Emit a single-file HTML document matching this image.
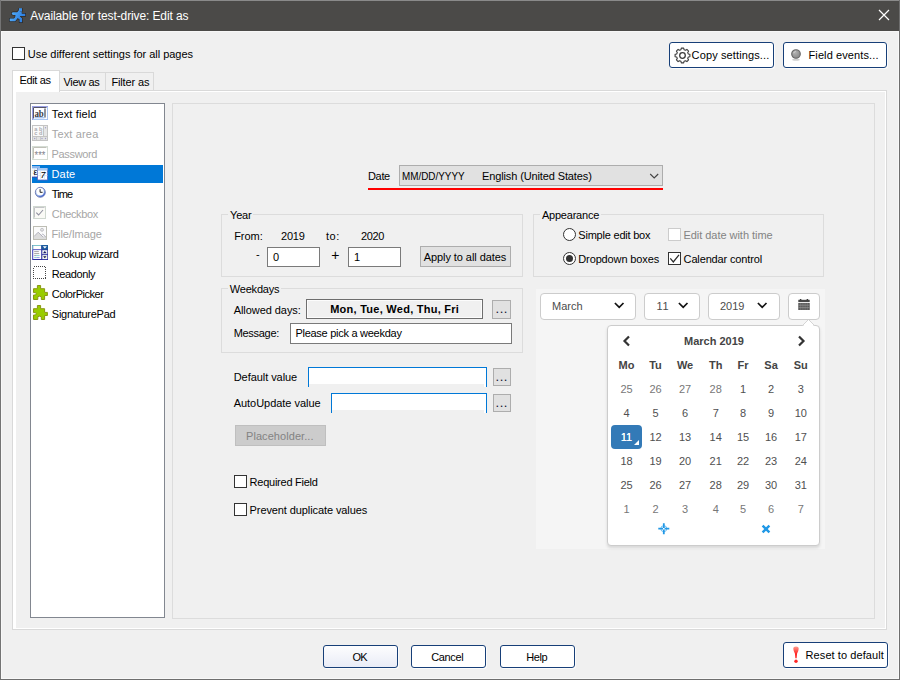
<!DOCTYPE html>
<html><head><meta charset="utf-8"><title>Available for test-drive: Edit as</title>
<style>
*{box-sizing:border-box;margin:0;padding:0}
html,body{width:900px;height:680px;overflow:hidden;background:#f0f0f0}
body{position:relative;font-family:"Liberation Sans",sans-serif;font-size:11px;color:#000}
.a{position:absolute}
.t{position:absolute;white-space:nowrap;line-height:13px;font-size:11px}
.dis{color:#838383}
.grp{position:absolute;border:1px solid #dcdcdc}
.lbl{background:#f0f0f0}
.btn{position:absolute;background:#e1e1e1;border:1px solid #adadad}
.bbtn{position:absolute;background:#fff;border:1px solid #173f78;border-radius:3px;box-shadow:1px 1px 0 rgba(255,255,255,.75)}
.inp{position:absolute;background:#fff;border:1px solid #7a7a7a}
.cb{position:absolute;width:13px;height:13px;background:#fff;border:1px solid #333}
.rb{position:absolute;width:13px;height:13px;background:#fff;border:1px solid #333;border-radius:50%}
.sel{position:absolute;background:#fff;border:1px solid #ccc;border-radius:4px;height:27px;top:293px}
.cal{font-family:"Liberation Sans",sans-serif;font-size:11px;color:#333}
.cal .t{font-size:11px}
.d{position:absolute;width:30px;text-align:center;line-height:13px;font-size:11px;color:#505050}
.o{color:#777}
.h{font-weight:bold;color:#444}
</style></head><body>
<!-- window frame -->
<div class="a" style="left:0;top:0;width:900px;height:32px;background:#4b4a48"></div>
<div class="a" style="left:0;top:31px;width:900px;height:1px;background:#f7f7f7"></div>
<div class="a" style="left:0;top:0;width:900px;height:1px;background:#8a8a8a"></div>
<div class="a" style="left:0;top:0;width:1px;height:680px;background:#747474"></div>
<div class="a" style="left:898px;top:32px;width:1px;height:647px;background:#f8f8f8"></div>
<div class="a" style="left:1px;top:32px;width:1px;height:647px;background:#f8f8f8"></div>
<div class="a" style="left:1px;top:678px;width:898px;height:1px;background:#f8f8f8"></div>
<div class="a" style="left:899px;top:0;width:1px;height:680px;background:#6e6e6e"></div>
<div class="a" style="left:0;top:679px;width:900px;height:1px;background:#6e6e6e"></div>
<!-- title -->
<svg class="a" style="left:6px;top:4px" width="24" height="22" viewBox="0 0 24 22"><defs><linearGradient id="rm" gradientUnits="userSpaceOnUse" x1="4" y1="8" x2="19" y2="14"><stop offset="0" stop-color="#56b0fa"/><stop offset="1" stop-color="#2878dc"/></linearGradient></defs><g fill="none" stroke-linejoin="miter"><path d="M14.45 4.2V7.6" stroke="#2a2420" stroke-width="4.4" stroke-linecap="butt"/><path d="M14.3 7.6L10.8 13.4" stroke="#2a2420" stroke-width="5.7" stroke-linecap="butt"/><path d="M7.2 9.55H13" stroke="#2a2420" stroke-width="4.1" stroke-linecap="round"/><path d="M14.8 10.85H18.1" stroke="#2a2420" stroke-width="3.5999999999999996" stroke-linecap="square"/><path d="M10.8 13.2L8.6 15.85H5" stroke="#2a2420" stroke-width="3.9000000000000004" stroke-linecap="square"/><path d="M12 12.6L14.8 14.8V17" stroke="#2a2420" stroke-width="3.8" stroke-linecap="square"/><path d="M14.45 4.2V7.6" stroke="url(#rm)" stroke-width="3.1" stroke-linecap="butt"/><path d="M14.3 7.6L10.8 13.4" stroke="url(#rm)" stroke-width="4.4" stroke-linecap="butt"/><path d="M7.2 9.55H13" stroke="url(#rm)" stroke-width="2.8" stroke-linecap="round"/><path d="M14.8 10.85H18.1" stroke="url(#rm)" stroke-width="2.3" stroke-linecap="square"/><path d="M10.8 13.2L8.6 15.85H5" stroke="url(#rm)" stroke-width="2.6" stroke-linecap="square"/><path d="M12 12.6L14.8 14.8V17" stroke="url(#rm)" stroke-width="2.5" stroke-linecap="square"/></g></svg>
<div class="t" id="title" style="letter-spacing:-0.116px;left:30.3px;top:9px;font-size:12px;line-height:14px;color:#fff">Available for test-drive: Edit as</div>
<svg class="a" style="left:878px;top:9px" width="12" height="12" viewBox="0 0 12 12"><path d="M1 1L11 11M11 1L1 11" stroke="#fff" stroke-width="1.2" fill="none"/></svg>

<!-- top row -->
<div class="cb" style="left:12px;top:47px"></div>
<div class="t" style="letter-spacing:-0.026px;left:27.8px;top:48px">Use different settings for all pages</div>
<div class="bbtn" style="left:669px;top:42px;width:105px;height:26px"></div>
<svg class="a" style="left:674px;top:47px" width="17" height="17" viewBox="0 0 17 17"><g fill="none" stroke="#3c3c3c"><path d="M6.95 2.70L7.33 1.09L9.67 1.09L10.05 2.70L11.50 3.30L12.91 2.43L14.57 4.09L13.70 5.50L14.30 6.95L15.91 7.33L15.91 9.67L14.30 10.05L13.70 11.50L14.57 12.91L12.91 14.57L11.50 13.70L10.05 14.30L9.67 15.91L7.33 15.91L6.95 14.30L5.50 13.70L4.09 14.57L2.43 12.91L3.30 11.50L2.70 10.05L1.09 9.67L1.09 7.33L2.70 6.95L3.30 5.50L2.43 4.09L4.09 2.43L5.50 3.30Z" stroke-width="1.1" stroke-linejoin="round"/><circle cx="8.5" cy="8.5" r="2.8" stroke-width="1.3"/></g></svg>
<div class="t" style="letter-spacing:0.12px;left:691.6px;top:49px">Copy settings...</div>
<div class="bbtn" style="left:783px;top:42px;width:104px;height:26px"></div>
<svg class="a" style="left:789.5px;top:48.2px" width="12" height="14" viewBox="0 0 12 14"><defs><radialGradient id="gb" cx="0.38" cy="0.32" r="0.75"><stop offset="0" stop-color="#b4b4b4"/><stop offset="1" stop-color="#858585"/></radialGradient></defs><ellipse cx="6" cy="11.8" rx="3.8" ry="1" fill="#cfcfcf"/><circle cx="6" cy="6" r="4.3" fill="url(#gb)" stroke="#666" stroke-width="1.1"/><path d="M3.6 5.2Q4.2 3.6 5.8 3.2" stroke="#d8d8d8" stroke-width="0.8" fill="none"/></svg>
<div class="t" style="letter-spacing:0.107px;left:808.5px;top:49px">Field events...</div>

<!-- tabs -->
<div class="a" style="left:12px;top:90px;width:875px;height:540px;background:#fff;border:1px solid #d9d9d9"></div>
<div class="a" style="left:16px;top:92px;width:869px;height:536px;background:#f0f0f0"></div>
<div class="a" style="left:59px;top:72px;width:47px;height:19px;background:#f0f0f0;border:1px solid #d9d9d9;border-left:none"></div>
<div class="a" style="left:105px;top:72px;width:49px;height:19px;background:#f0f0f0;border:1px solid #d9d9d9"></div>
<div class="a" style="left:12px;top:70px;width:48px;height:22px;background:#fff;border:1px solid #d9d9d9;border-bottom:none"></div>
<div class="t" style="letter-spacing:-0.333px;left:19.4px;top:74px">Edit as</div>
<div class="t" style="letter-spacing:-0.367px;left:63.6px;top:76px">View as</div>
<div class="t" style="letter-spacing:-0.125px;left:111.4px;top:76px">Filter as</div>

<!-- list -->
<div class="a" style="left:30px;top:103px;width:135px;height:515px;background:#fff;border:1px solid #828790"></div>
<div class="a" style="left:32px;top:165px;width:131px;height:18px;background:#0078d7"></div>
<div class="t" style="letter-spacing:0.133px;left:51.8px;top:108px">Text field</div>
<div class="t" style="letter-spacing:0.150px;left:51.8px;top:128px;color:#a6a6a6">Text area</div>
<div class="t" style="letter-spacing:-0.33px;left:51.5px;top:148px;color:#a6a6a6">Password</div>
<div class="t" style="letter-spacing:0.167px;left:51.5px;top:168px;color:#fff">Date</div>
<div class="t" style="letter-spacing:-0.933px;left:51.8px;top:188px">Time</div>
<div class="t" style="letter-spacing:-0.357px;left:51.8px;top:208px;color:#a6a6a6">Checkbox</div>
<div class="t" style="letter-spacing:-0.122px;left:51.5px;top:228px;color:#a6a6a6">File/Image</div>
<div class="t" style="letter-spacing:-0.317px;left:51.8px;top:248px">Lookup wizard</div>
<div class="t" style="letter-spacing:-0.400px;left:51.8px;top:268px">Readonly</div>
<div class="t" style="letter-spacing:-0.480px;left:51.8px;top:288px">ColorPicker</div>
<div class="t" style="letter-spacing:-0.255px;left:51.8px;top:308px">SignaturePad</div>

<!-- right group -->
<div class="grp" style="left:172px;top:103px;width:703px;height:516px"></div>

<!-- list icons -->
<svg class="a" style="left:32px;top:106px" width="16" height="14" viewBox="0 0 16 14"><rect x="0.5" y="0.5" width="15" height="13" fill="#fff" stroke="#9aa0e4"/><path d="M1.5 12.5V1.5H14.5" fill="none" stroke="#55556a"/><path d="M15.5 1v12.5H1" fill="none" stroke="#a8c6f4"/><text x="2.4" y="11.4" font-family="Liberation Serif,serif" font-size="11" font-weight="bold" fill="#3a3a44" textLength="9.4" lengthAdjust="spacingAndGlyphs">ab</text><path d="M13 2.4v9" stroke="#3a3a44" stroke-width="1.1"/><path d="M2.5 11.8h10" stroke="#7aa8ec" stroke-width="0.9"/></svg>
<svg class="a" style="left:32px;top:125px" width="16" height="16" viewBox="0 0 16 16"><rect x="0.5" y="0.5" width="15" height="15" fill="#fafafa" stroke="#c4c4c4"/><path d="M11.5 1v14M1 11.5h14" stroke="#c4c4c4"/><rect x="12" y="1" width="3" height="10" fill="#e6e6e6"/><rect x="1" y="12" width="14" height="3" fill="#e2e2e2"/><path d="M4.5 12v3M8.5 12v3" stroke="#c4c4c4" stroke-width="0.8"/><text x="2.2" y="6" font-family="Liberation Sans,sans-serif" font-size="5.6" font-weight="bold" fill="#acacb2">a</text><text x="7" y="6" font-family="Liberation Sans,sans-serif" font-size="5.6" font-weight="bold" fill="#acacb2">b</text><text x="2.2" y="10.4" font-family="Liberation Sans,sans-serif" font-size="5.6" font-weight="bold" fill="#acacb2">c</text><text x="7" y="10.4" font-family="Liberation Sans,sans-serif" font-size="5.6" font-weight="bold" fill="#acacb2">d</text><circle cx="13.5" cy="2.7" r="0.7" fill="#a0a0c8"/><circle cx="13.5" cy="13.5" r="0.7" fill="#a0a0c8"/><circle cx="2.7" cy="13.5" r="0.7" fill="#a0a0c8"/><circle cx="10" cy="13.5" r="0.7" fill="#a0a0c8"/></svg>
<svg class="a" style="left:32px;top:146px" width="16" height="14" viewBox="0 0 16 14"><rect x="0.5" y="0.5" width="15" height="13" fill="#fff" stroke="#d4dcd4"/><path d="M1.5 12.5V1.5H14.5" fill="none" stroke="#c0c0b8"/><text x="2.6" y="13.4" font-family="Liberation Sans,sans-serif" font-size="11.5" fill="#85858e" textLength="10.8" lengthAdjust="spacingAndGlyphs">***</text></svg>
<svg class="a" style="left:32px;top:165px" width="16" height="16" viewBox="0 0 16 16"><rect x="0" y="1.5" width="8" height="10.5" fill="#fff"/><rect x="0" y="1" width="8" height="2.4" fill="#8ab6ee"/><path d="M0 5.2h8M0 8h8M2.6 3.4v8.6" stroke="#c8daf4" stroke-width="0.7"/><text x="1.6" y="10.2" font-family="Liberation Sans,sans-serif" font-size="9" fill="#000">ε</text><rect x="0" y="11.6" width="8" height="1" fill="#3c4ab0"/><rect x="5.5" y="3.5" width="10" height="11.5" fill="#fff" stroke="#5a64c0" stroke-width="0.8"/><rect x="5.5" y="3" width="10" height="2.6" fill="#a4c8f4"/><path d="M5.5 8h10M5.5 10.6h10M8.6 5.6v9M12.4 5.6v9" stroke="#cfe0f6" stroke-width="0.7"/><text x="8.6" y="13.4" font-family="Liberation Sans,sans-serif" font-size="9" font-style="italic" fill="#000">7</text></svg>
<svg class="a" style="left:34px;top:186px" width="13" height="13" viewBox="0 0 13 13"><defs><linearGradient id="ck" x1="0.2" y1="0" x2="0.8" y2="1"><stop offset="0" stop-color="#dfe6f4"/><stop offset="0.55" stop-color="#9db8ea"/><stop offset="1" stop-color="#2c50c8"/></linearGradient></defs><circle cx="6.3" cy="6.3" r="5" fill="url(#ck)" stroke="#4a5aa0" stroke-width="0.7"/><circle cx="6.1" cy="5.8" r="3.7" fill="#fff"/><path d="M6.1 3.2V6.3H8.6" fill="none" stroke="#222" stroke-width="1"/></svg>
<svg class="a" style="left:33px;top:206px" width="13" height="13" viewBox="0 0 13 13"><rect x="0.5" y="0.5" width="12" height="12" fill="#fafaf6" stroke="#d0d8d0"/><path d="M1.5 11.5V1.5H11.5" fill="none" stroke="#c4c4c8"/><path d="M3.3 6.6L5.6 9L10 4" fill="none" stroke="#9090a0" stroke-width="1.1"/></svg>
<svg class="a" style="left:33px;top:226px" width="14" height="14" viewBox="0 0 14 14"><rect x="0.5" y="0.5" width="13" height="13" fill="#fbfbfb" stroke="#bdbdb4"/><circle cx="9" cy="3.8" r="1.5" fill="#e4e4e4" stroke="#b0b0b8" stroke-width="0.7"/><path d="M1 10.5L5.2 6.2L10 11L11.4 9.6L13 11.2V13H1Z" fill="#dcdcdc"/><path d="M1 10.5L5.2 6.2L10.2 11.2M8.4 9.4L9.8 8L13 11.2" fill="none" stroke="#a4a4b4" stroke-width="0.8"/></svg>
<svg class="a" style="left:32px;top:245px" width="16" height="15" viewBox="0 0 16 15"><rect x="0.2" y="0" width="15.8" height="15" fill="#2c2c9e"/><rect x="0.2" y="4.4" width="1" height="10" fill="#6464cc"/><path d="M0.7 4.6V0.5H9.4" fill="none" stroke="#7cc4cc" stroke-width="1"/><rect x="1.2" y="1" width="8" height="3.2" fill="#fff"/><rect x="1.2" y="4.2" width="8" height="0.9" fill="#7878d0"/><rect x="1.2" y="5.1" width="8" height="8.9" fill="#fff"/><path d="M2.2 6.6H6.8M2.2 8.6H7.2M2.2 10.6H4" stroke="#9a9a9a" stroke-width="0.9"/><path d="M4 10.6H7.6M2.2 12.6H4.6" stroke="#7cccd0" stroke-width="0.9"/><path d="M4.6 12.6H7.6" stroke="#8c8cdc" stroke-width="0.9"/><rect x="9.6" y="0" width="6.4" height="4.6" fill="#1c5c9e"/><path d="M10.8 1.3H14.9L12.85 3.6Z" fill="#fff"/><rect x="10.3" y="5.2" width="5" height="4" fill="#f4f8f4"/><path d="M10.9 8.3H14.7L12.8 6.1Z" fill="#18186a"/><rect x="10.3" y="10.1" width="5" height="4" fill="#f4f8f4"/><path d="M11.1 11.2H14.5L12.8 13.3Z" fill="#18183a"/></svg>
<svg class="a" style="left:33px;top:266px" width="14" height="14" viewBox="0 0 14 14"><rect x="0.5" y="0.5" width="12" height="12" fill="none" stroke="#444" stroke-width="1" stroke-dasharray="1 1" shape-rendering="crispEdges"/></svg>
<svg class="a" style="left:33px;top:285px" width="16" height="15" viewBox="0 0 16 15"><path d="M0.5 3.7H4.4V0.5H7.6V3.7H11.6V7.4H14.4V10.5H11.6V14.5H8.3V11.7Q6.5 10.6 4.8 11.7V14.5H0.5V10H2.6Q3.9 8.8 2.6 7.6H0.5Z" fill="#99cc00" stroke="#8a9812" stroke-width="1" stroke-linejoin="round"/></svg>
<svg class="a" style="left:33px;top:305px" width="16" height="15" viewBox="0 0 16 15"><path d="M0.5 3.7H4.4V0.5H7.6V3.7H11.6V7.4H14.4V10.5H11.6V14.5H8.3V11.7Q6.5 10.6 4.8 11.7V14.5H0.5V10H2.6Q3.9 8.8 2.6 7.6H0.5Z" fill="#99cc00" stroke="#8a9812" stroke-width="1" stroke-linejoin="round"/></svg>


<!-- date format row -->
<div class="t" style="letter-spacing:-0.333px;left:368.0px;top:170px">Date</div>
<div class="btn" style="left:399px;top:165px;width:264px;height:21px"></div>
<div class="t" style="left:402.4px;top:170px;transform:scaleX(0.898);transform-origin:0 0">MM/DD/YYYY</div>
<div class="t" style="letter-spacing:-0.123px;left:482.0px;top:170px">English (United States)</div>
<svg class="a" style="left:649px;top:172.6px" width="11" height="7" viewBox="0 0 11 7"><path d="M1.2 1L5.2 5L9.2 1" stroke="#444" stroke-width="1.1" fill="none"/></svg>
<div class="a" style="left:368px;top:188px;width:295px;height:2px;background:#f00"></div>

<!-- Year -->
<div class="grp" style="left:221px;top:214px;width:302px;height:63px"></div>
<div class="t lbl" style="letter-spacing:-0.200px;left:228.0px;top:209px;padding:0 2px">Year</div>
<div class="t" style="letter-spacing:-0.050px;left:234.2px;top:230px">From:</div>
<div class="t" style="letter-spacing:-0.200px;left:281.0px;top:230px">2019</div>
<div class="t" style="letter-spacing:0.500px;left:326.0px;top:230px">to:</div>
<div class="t" style="letter-spacing:-0.333px;left:361.0px;top:230px">2020</div>
<div class="t" style="left:256px;top:248px">-</div>
<div class="inp" style="left:267px;top:247px;width:53px;height:20px"></div>
<div class="t" style="left:273px;top:251px">0</div>
<div class="t" style="left:331.3px;top:249px;font-size:14px">+</div>
<div class="inp" style="left:348px;top:247px;width:53px;height:20px"></div>
<div class="t" style="left:354px;top:251px">1</div>
<div class="btn" style="left:420px;top:246px;width:91px;height:21px"></div>
<div class="t" style="letter-spacing:-0.071px;left:423.7px;top:251px">Apply to all dates</div>

<!-- Weekdays -->
<div class="grp" style="left:221px;top:288px;width:302px;height:65px"></div>
<div class="t lbl" style="letter-spacing:-0.200px;left:227.8px;top:283px;padding:0 2px">Weekdays</div>
<div class="t" style="letter-spacing:-0.058px;left:233.7px;top:304px">Allowed days:</div>
<div class="a" style="left:306px;top:299px;width:177px;height:20px;border:1px solid #6e6e6e;box-shadow:inset 0 0 0 1px #fcfcfc;background:#f0f0f0"></div>
<div class="t" style="letter-spacing:0.259px;left:330.2px;top:303px;font-weight:bold">Mon, Tue, Wed, Thu, Fri</div>
<div class="btn" style="left:492px;top:300px;width:19px;height:19px"></div>
<div class="t" style="left:495.6px;top:302px;letter-spacing:0.45px;font-size:13px;color:#101030">...</div>
<div class="t" style="letter-spacing:-0.300px;left:233.7px;top:327px">Message:</div>
<div class="inp" style="left:290px;top:323px;width:222px;height:21px"></div>
<div class="t" style="letter-spacing:-0.270px;left:295.4px;top:327px">Please pick a weekday</div>

<!-- default / autoupdate -->
<div class="t" style="letter-spacing:-0.058px;left:233.7px;top:371px">Default value</div>
<div class="a" style="left:308px;top:367px;width:179px;height:20px;border:1px solid #0078d7;border-bottom:none;background:#fff"></div>
<div class="a" style="left:309px;top:384px;width:175px;height:3px;background:#f0f0f0"></div>
<div class="btn" style="left:493px;top:368px;width:18px;height:18px"></div>
<div class="t" style="left:495.6px;top:370px;letter-spacing:0.45px;font-size:13px;color:#101030">...</div>
<div class="t" style="letter-spacing:-0.033px;left:233.7px;top:397px">AutoUpdate value</div>
<div class="a" style="left:331px;top:393px;width:156px;height:20px;border:1px solid #0078d7;border-bottom:none;background:#fff"></div>
<div class="a" style="left:332px;top:410px;width:152px;height:3px;background:#f0f0f0"></div>
<div class="btn" style="left:493px;top:394px;width:18px;height:18px"></div>
<div class="t" style="left:495.6px;top:396px;letter-spacing:0.45px;font-size:13px;color:#101030">...</div>
<div class="a" style="left:235px;top:425px;width:91px;height:21px;background:#cccccc;border:1px solid #bfbfbf"></div>
<div class="t dis" style="letter-spacing:0.069px;left:246px;top:430px">Placeholder...</div>

<div class="cb" style="left:234px;top:475px"></div>
<div class="t" style="letter-spacing:-0.246px;left:249.6px;top:476px">Required Field</div>
<div class="cb" style="left:234px;top:503px"></div>
<div class="t" style="letter-spacing:-0.096px;left:249.6px;top:504px">Prevent duplicate values</div>

<!-- Appearance -->
<div class="grp" style="left:533px;top:214px;width:291px;height:63px"></div>
<div class="t lbl" style="letter-spacing:-0.211px;left:539.9px;top:209px;padding:0 2px">Appearance</div>
<div class="rb" style="left:563px;top:228px"></div>
<div class="t" style="letter-spacing:-0.214px;left:578.3px;top:229px">Simple edit box</div>
<div class="rb" style="left:563px;top:252px"></div>
<div class="a" style="left:566px;top:255px;width:7px;height:7px;border-radius:50%;background:#333"></div>
<div class="t" style="letter-spacing:-0.131px;left:578.3px;top:253px">Dropdown boxes</div>
<div class="cb" style="left:668px;top:228px;border-color:#ccc"></div>
<div class="t dis" style="letter-spacing:-0.033px;left:683.4px;top:229px">Edit date with time</div>
<div class="cb" style="left:668px;top:252px"></div>
<svg class="a" style="left:668px;top:252px" width="13" height="13" viewBox="0 0 13 13"><path d="M2.3 6.4L5.3 9.9L11 2.8" stroke="#2a2a2a" stroke-width="1.25" fill="none"/></svg>
<div class="t" style="letter-spacing:-0.147px;left:683.6px;top:253px">Calendar control</div>

<!-- bottom buttons -->
<div class="bbtn" style="left:323px;top:645px;width:75px;height:23px;background:linear-gradient(#fdfdfe,#e9ecf7)"></div>
<div class="t" style="letter-spacing:-0.6px;left:352.4px;top:651px">OK</div>
<div class="bbtn" style="left:411px;top:645px;width:75px;height:23px"></div>
<div class="t" style="letter-spacing:-0.380px;left:431.3px;top:651px">Cancel</div>
<div class="bbtn" style="left:500px;top:645px;width:75px;height:23px"></div>
<div class="t" style="letter-spacing:-0.400px;left:526.2px;top:651px">Help</div>
<div class="bbtn" style="left:783px;top:642px;width:105px;height:26px"></div>
<div class="t" style="letter-spacing:0.080px;left:805.6px;top:649px">Reset to default</div>
<svg class="a" style="left:792.3px;top:646px" width="8" height="18" viewBox="0 0 8 18"><defs><linearGradient id="rg" x1="0" y1="0" x2="0" y2="1"><stop offset="0" stop-color="#ff9c8c"/><stop offset="0.6" stop-color="#ff2a2a"/><stop offset="1" stop-color="#ff1a1a"/></linearGradient></defs><path d="M1.3 2.8Q1.3 0.5 4 0.5Q6.7 0.5 6.7 2.8Q6.5 5.6 5.1 7.6L4.6 12.2H3.4L2.9 7.6Q1.5 5.6 1.3 2.8Z" fill="url(#rg)"/><circle cx="4" cy="15.2" r="1.7" fill="#ff2626"/></svg>

<!-- calendar preview -->
<div class="a" style="left:536px;top:289px;width:289px;height:260px;background:#f5f5f5"></div>
<div class="sel" style="left:540px;width:96px"></div>
<div class="t" style="left:552px;top:300px;color:#4c4c4c">March</div>
<svg class="a" style="left:614px;top:302px" width="11" height="8" viewBox="0 0 11 8"><path d="M0.9 1L5.2 5.4L9.5 1" stroke="#111" stroke-width="1.7" fill="none"/></svg>
<div class="sel" style="left:644px;width:56px"></div>
<div class="t" style="left:656.5px;top:300px;color:#4c4c4c;letter-spacing:0.6px">11</div>
<svg class="a" style="left:678px;top:302px" width="11" height="8" viewBox="0 0 11 8"><path d="M0.9 1L5.2 5.4L9.5 1" stroke="#111" stroke-width="1.7" fill="none"/></svg>
<div class="sel" style="left:708px;width:72px"></div>
<div class="t" style="left:720px;top:300px;color:#4c4c4c">2019</div>
<svg class="a" style="left:757px;top:302px" width="11" height="8" viewBox="0 0 11 8"><path d="M0.9 1L5.2 5.4L9.5 1" stroke="#111" stroke-width="1.7" fill="none"/></svg>
<div class="a" style="left:607px;top:325px;width:213px;height:221px;background:#fff;border:1px solid #ccc;border-radius:4px;box-shadow:0 2px 3px rgba(0,0,0,.12)"></div>
<svg class="a" style="left:801px;top:318px" width="16" height="8" viewBox="0 0 16 8"><path d="M1.5 7.5L7.5 1.5L13.5 7.5Z" fill="#fff"/><path d="M1.5 7.5L7.5 1.5L13.5 7.5" fill="none" stroke="#d4d4d4" stroke-width="1"/></svg>
<div class="sel" style="left:788px;width:32px"></div>
<svg class="a" style="left:798px;top:299px" width="12" height="12" viewBox="0 0 12 12"><rect x="0.3" y="0.8" width="11.4" height="2.2" fill="#484848"/><path d="M2.6 0v1.6M9.4 0v1.6" stroke="#3c3c3c" stroke-width="1.5"/><rect x="0.3" y="3.9" width="11.4" height="7.1" fill="#4c4c4c"/><path d="M2.2 3.9v7.1M4.1 3.9v7.1M6 3.9v7.1M7.9 3.9v7.1M9.8 3.9v7.1" stroke="#a8a8a8" stroke-width="0.5"/><path d="M0.3 6.2h11.4M0.3 8.6h11.4" stroke="#9c9c9c" stroke-width="0.6"/></svg>
<div class="a" style="left:804px;top:325px;width:9px;height:1px;background:#fff"></div>
<svg class="a" style="left:621.8px;top:335px" width="9" height="12" viewBox="0 0 9 12"><path d="M7 1.5L2.5 6L7 10.5" stroke="#333" stroke-width="2.2" fill="none"/></svg>
<svg class="a" style="left:797px;top:335px" width="9" height="12" viewBox="0 0 9 12"><path d="M2 1.5L6.5 6L2 10.5" stroke="#333" stroke-width="2.2" fill="none"/></svg>
<div class="t h" style="left:684px;top:335px">March 2019</div>
<div class="a" style="left:611px;top:425px;width:31px;height:24px;background:#337ab7;border-radius:4px"></div>
<div class="a" style="left:634px;top:440px;width:0;height:0;border-style:solid;border-width:0 0 5.5px 5.5px;border-color:transparent transparent #fff transparent"></div>
<div class="d h" style="left:611.5px;top:359px">Mo</div>
<div class="d h" style="left:640.5px;top:359px">Tu</div>
<div class="d h" style="left:670.1px;top:359px">We</div>
<div class="d h" style="left:700.7px;top:359px">Th</div>
<div class="d h" style="left:728.0px;top:359px">Fr</div>
<div class="d h" style="left:756.1px;top:359px">Sa</div>
<div class="d h" style="left:785.8px;top:359px">Su</div>
<div class="d o" style="left:611.5px;top:383px">25</div>
<div class="d o" style="left:640.5px;top:383px">26</div>
<div class="d o" style="left:670.1px;top:383px">27</div>
<div class="d o" style="left:700.7px;top:383px">28</div>
<div class="d " style="left:728.0px;top:383px">1</div>
<div class="d " style="left:756.1px;top:383px">2</div>
<div class="d " style="left:785.8px;top:383px">3</div>
<div class="d " style="left:611.5px;top:407px">4</div>
<div class="d " style="left:640.5px;top:407px">5</div>
<div class="d " style="left:670.1px;top:407px">6</div>
<div class="d " style="left:700.7px;top:407px">7</div>
<div class="d " style="left:728.0px;top:407px">8</div>
<div class="d " style="left:756.1px;top:407px">9</div>
<div class="d " style="left:785.8px;top:407px">10</div>
<div class="d" style="left:611.5px;top:431px;color:#fff;text-shadow:0 0 0.6px #fff">11</div>
<div class="d " style="left:640.5px;top:431px">12</div>
<div class="d " style="left:670.1px;top:431px">13</div>
<div class="d " style="left:700.7px;top:431px">14</div>
<div class="d " style="left:728.0px;top:431px">15</div>
<div class="d " style="left:756.1px;top:431px">16</div>
<div class="d " style="left:785.8px;top:431px">17</div>
<div class="d " style="left:611.5px;top:455px">18</div>
<div class="d " style="left:640.5px;top:455px">19</div>
<div class="d " style="left:670.1px;top:455px">20</div>
<div class="d " style="left:700.7px;top:455px">21</div>
<div class="d " style="left:728.0px;top:455px">22</div>
<div class="d " style="left:756.1px;top:455px">23</div>
<div class="d " style="left:785.8px;top:455px">24</div>
<div class="d " style="left:611.5px;top:479px">25</div>
<div class="d " style="left:640.5px;top:479px">26</div>
<div class="d " style="left:670.1px;top:479px">27</div>
<div class="d " style="left:700.7px;top:479px">28</div>
<div class="d " style="left:728.0px;top:479px">29</div>
<div class="d " style="left:756.1px;top:479px">30</div>
<div class="d " style="left:785.8px;top:479px">31</div>
<div class="d o" style="left:611.5px;top:503px">1</div>
<div class="d o" style="left:640.5px;top:503px">2</div>
<div class="d o" style="left:670.1px;top:503px">3</div>
<div class="d o" style="left:700.7px;top:503px">4</div>
<div class="d o" style="left:728.0px;top:503px">5</div>
<div class="d o" style="left:756.1px;top:503px">6</div>
<div class="d o" style="left:785.8px;top:503px">7</div>
<svg class="a" style="left:658px;top:523px" width="12" height="12" viewBox="0 0 12 12"><g fill="none" stroke="#2098e6"><circle cx="5.8" cy="5.7" r="3" stroke-width="1" stroke-opacity="0.6"/><path d="M5.8 0.2V4.9M5.8 6.5V11.2M0.3 5.7H5M6.6 5.7H11.3" stroke-width="1.8"/></g></svg>
<svg class="a" style="left:761px;top:524px" width="10" height="10" viewBox="0 0 10 10"><path d="M1.6 1.6L8.4 8.4M8.4 1.6L1.6 8.4" stroke="#2098e6" stroke-width="2.4" fill="none"/></svg>


</body></html>
